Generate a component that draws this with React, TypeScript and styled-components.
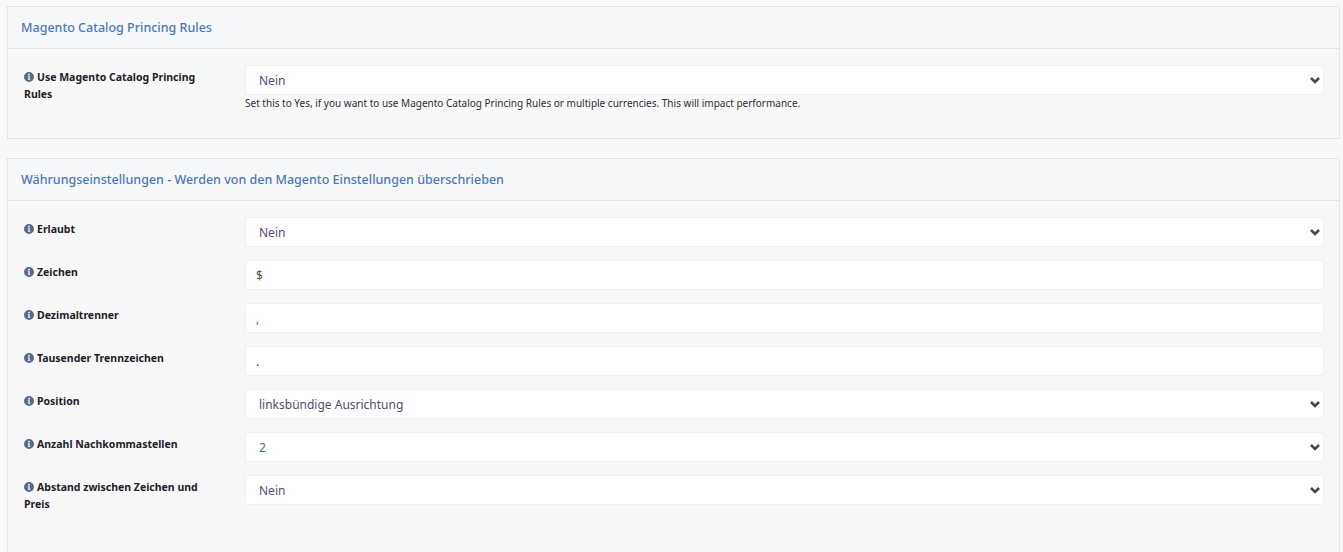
import React from "react";
import styled, { createGlobalStyle } from "styled-components";

const Global = createGlobalStyle`
  html, body { margin: 0; padding: 0; background: #f8f8f8; }
  body { font-family: "Noto Sans", "Open Sans", sans-serif; width: 1343px; height: 552px; overflow: hidden; }
`;

const Page = styled.div`
  display: flex;
  flex-direction: column;
  gap: 19px;
  padding: 6px 3px 0 7px;
`;

const Panel = styled.section<{ $pad: number }>`
  border: 1px solid #e3e5ea;
  background: #f8f8f8;
  padding-bottom: ${(p) => p.$pad}px;
`;

const Header = styled.header`
  height: 41px;
  display: flex;
  align-items: center;
  padding-left: 13px;
  background: #f7f8fa;
  border-bottom: 1px solid #e3e5ea;
  color: #4a7ab5;
  font-size: 12.5px;
  font-weight: 500;
`;

const Body = styled.div`
  display: flex;
  flex-direction: column;
  gap: 13px;
  padding: 16px 15px 0 16px;
`;

const Row = styled.div`
  display: grid;
  grid-template-columns: 221px 1fr;
`;

const Label = styled.label`
  font-size: 10.5px;
  font-weight: 700;
  line-height: 17px;
  color: #1d2129;
  padding-top: 4px;
  padding-right: 30px;
`;

const Info = styled.svg`
  width: 10px;
  height: 10px;
  margin-right: 3px;
  vertical-align: -1px;
  fill: #5a6a85;
`;

const Field = styled.div`
  position: relative;
  height: 30px;
  box-sizing: border-box;
  background: #fff;
  border: 1px solid #f0f1f3;
  border-radius: 3px;
  display: flex;
  align-items: center;
  font-size: 12px;
  padding-left: ${(p: { $pl?: number }) => p.$pl ?? 13}px;
  color: ${(p: { $c?: string }) => p.$c ?? "#5b4a78"};
`;

const Chevron = styled.svg`
  position: absolute;
  right: 3px;
  top: 9px;
  width: 10px;
  height: 10px;
  fill: none;
  stroke: #3f4853;
  stroke-width: 2.6;
`;

const Help = styled.div`
  font-size: 10px;
  line-height: 14px;
  color: #2b2f36;
  margin-top: 1px;
`;

const InfoIcon = () => (
  <Info viewBox="0 0 20 20">
    <path d="M10 0a10 10 0 1 0 0 20 10 10 0 0 0 0-20zm0 3.6a1.8 1.8 0 1 1 0 3.6 1.8 1.8 0 0 1 0-3.6zM12.6 15.6H7.6v-1.6h1v-4h-1V8.4h3.8V14h1.2z" fillRule="evenodd" />
  </Info>
);

type F = { label: string; value: string; select?: boolean; color?: string; pl?: number };

const FieldRow = ({ label, value, select, color, pl, help }: F & { help?: string }) => (
  <Row>
    <Label>
      <InfoIcon />
      {label}
    </Label>
    <div>
      <Field $c={color} $pl={pl}>
        {value}
        {select && (
          <Chevron viewBox="0 0 10 10">
            <path d="M1 3l4 4 4-4" />
          </Chevron>
        )}
      </Field>
      {help && <Help>{help}</Help>}
    </div>
  </Row>
);

const fields: F[] = [
  { label: "Erlaubt", value: "Nein", select: true },
  { label: "Zeichen", value: "$", color: "#4f5240", pl: 10 },
  { label: "Dezimaltrenner", value: ",", color: "#c0453f", pl: 10 },
  { label: "Tausender Trennzeichen", value: ".", color: "#3a4a40", pl: 10 },
  { label: "Position", value: "linksbündige Ausrichtung", select: true, color: "#4f4f66" },
  { label: "Anzahl Nachkommastellen", value: "2", select: true, color: "#3f6a8f" },
  { label: "Abstand zwischen Zeichen und Preis", value: "Nein", select: true },
];

export default function App() {
  return (
    <Page>
      <Global />
      <Panel $pad={28}>
        <Header>Magento Catalog Princing Rules</Header>
        <Body>
          <FieldRow
            label="Use Magento Catalog Princing Rules"
            value="Nein"
            select
            help="Set this to Yes, if you want to use Magento Catalog Princing Rules or multiple currencies. This will impact performance."
          />
        </Body>
      </Panel>
      <Panel $pad={43}>
        <Header>Währungseinstellungen - Werden von den Magento Einstellungen überschrieben</Header>
        <Body>
          {fields.map((f) => (
            <FieldRow key={f.label} {...f} />
          ))}
        </Body>
      </Panel>
    </Page>
  );
}
